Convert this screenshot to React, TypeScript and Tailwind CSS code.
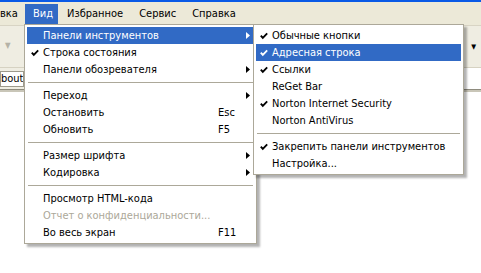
import React from "react";

const FONT = { fontFamily: '"DejaVu Sans Condensed", "DejaVu Sans", Verdana, sans-serif', fontStretch: "condensed" };

function Check({ white }: { white?: boolean }) {
  return (
    <svg width="8" height="8" viewBox="0 0 8 8">
      <polyline
        points="0.8,3.6 2.8,5.8 7.2,1.4"
        fill="none"
        stroke={white ? "#ffffff" : "#000000"}
        strokeWidth="1.9"
      />
    </svg>
  );
}

function Arrow({ white }: { white?: boolean }) {
  return (
    <svg width="4" height="7" viewBox="0 0 4 7">
      <polygon points="0,0 4,3.5 0,7" fill={white ? "#ffffff" : "#000000"} />
    </svg>
  );
}

interface ItemProps {
  label: string;
  check?: boolean;
  arrow?: boolean;
  shortcut?: string;
  active?: boolean;
  disabled?: boolean;
  wide?: boolean;
}

function Item({ label, check, arrow, shortcut, active, disabled, wide }: ItemProps) {
  return (
    <div
      className={`flex items-center h-[17px] text-[11px] leading-[17px] ${
        active ? "bg-[#316ac5] text-white" : disabled ? "text-[#aca899]" : "text-black"
      }`}
    >
      <div className="w-[16px] pl-[4px] flex items-center">{check && <Check white={active} />}</div>
      <div className="flex-1 whitespace-nowrap">{label}</div>
      {wide && (
        <>
          <div className="w-[28px] whitespace-nowrap">{shortcut}</div>
          <div className="w-[8px] flex items-center">{arrow && <Arrow white={active} />}</div>
        </>
      )}
    </div>
  );
}

function Sep() {
  return (
    <div className="h-[9px] flex items-center px-[1px]">
      <div className="h-px w-full bg-[#aca899]" />
    </div>
  );
}

export default function App() {
  return (
    <div className="relative w-[481px] h-[273px] overflow-hidden bg-white" style={FONT}>
      {/* title bar edge */}
      <div className="h-[2px] bg-[#0a5ae6]" />

      {/* menu bar */}
      <div className="h-[23px] bg-[#ece9d8] flex items-end text-[11px] text-black">
        <div className="flex h-[20px] mb-[1px] items-center">
          <span className="w-[25px] whitespace-nowrap">вка</span>
          <span className="h-full flex items-center pl-[8px] w-[33px] bg-[#316ac5] text-white">Вид</span>
          <span className="pl-[9px] pr-[8px] whitespace-nowrap">Избранное</span>
          <span className="px-[8px] whitespace-nowrap">Сервис</span>
          <span className="px-[8px] whitespace-nowrap">Справка</span>
        </div>
      </div>

      {/* toolbars */}
      <div className="h-[42px] bg-[#efede2] border-t border-[#d8d4c4] flex items-start">
        <span className="mt-[14px] ml-[5px] text-[8px] text-[#b5b2a6]">▼</span>
        <div className="flex-1" />
        <span className="mt-[16px] mr-[5px] text-[7px] text-black">▼</span>
      </div>
      <div className="h-[22px] flex border-t border-[#d6d2c2]">
        <div className="w-[24px] bg-[#efede2] pt-[3px]">
          <div className="h-[16px] bg-white border border-[#9d9a8c] text-[11px] leading-[14px] overflow-hidden whitespace-nowrap">bout</div>
        </div>
        <div className="flex-1 bg-white" />
      </div>
      <div className="h-px bg-[#8e8b7e]" />
      <div className="h-[2px] bg-[#c9c6b8]" />

      {/* main menu */}
      <div className="absolute left-[24px] top-[24px] w-[233px] bg-white border border-[#aca899] p-[2px] shadow-[3px_3px_2px_rgba(0,0,0,0.3)]">
        <Item wide label="Панели инструментов" arrow active />
        <Item wide label="Строка состояния" check />
        <Item wide label="Панели обозревателя" arrow />
        <Sep />
        <Item wide label="Переход" arrow />
        <Item wide label="Остановить" shortcut="Esc" />
        <Item wide label="Обновить" shortcut="F5" />
        <Sep />
        <Item wide label="Размер шрифта" arrow />
        <Item wide label="Кодировка" arrow />
        <Sep />
        <Item wide label="Просмотр HTML-кода" />
        <Item wide label="Отчет о конфиденциальности..." disabled />
        <Item wide label="Во весь экран" shortcut="F11" />
      </div>

      {/* submenu */}
      <div className="absolute left-[253px] top-[24px] w-[211px] bg-white border border-[#aca899] p-[2px] shadow-[3px_3px_2px_rgba(0,0,0,0.3)]">
        <Item label="Обычные кнопки" check />
        <Item label="Адресная строка" check active />
        <Item label="Ссылки" check />
        <Item label="ReGet Bar" />
        <Item label="Norton Internet Security" check />
        <Item label="Norton AntiVirus" />
        <Sep />
        <Item label="Закрепить панели инструментов" check />
        <Item label="Настройка..." />
      </div>
    </div>
  );
}
